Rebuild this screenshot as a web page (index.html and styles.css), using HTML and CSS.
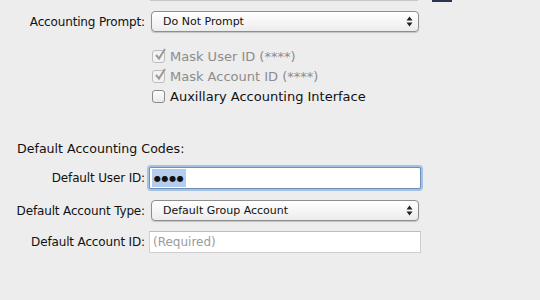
FILE: index.html
```html
<!DOCTYPE html>
<html>
<head>
<meta charset="utf-8">
<link rel="stylesheet" href="styles.css">
</head>
<body>
<div class="page">
  <div class="topbar">
    <div class="top-field"></div>
    <div class="top-square"></div>
  </div>

  <div class="row row-prompt">
    <div class="label">Accounting Prompt:</div>
    <div class="popup">
      <span class="popup-text">Do Not Prompt</span>
      <svg class="arrows" width="7" height="11" viewBox="0 0 7 11"><path d="M3.5 0.5 L6.5 4.5 L0.5 4.5 Z M3.5 10.5 L6.5 6.5 L0.5 6.5 Z" fill="#222"/></svg>
    </div>
  </div>

  <div class="checks">
    <label class="check disabled">
      <span class="box"><svg width="14" height="14" viewBox="0 0 14 14"><path d="M3 7 L6 10.5 L12 1" fill="none" stroke="#9a9a9a" stroke-width="2"/></svg></span>
      <span>Mask User ID (****)</span>
    </label>
    <label class="check disabled">
      <span class="box"><svg width="14" height="14" viewBox="0 0 14 14"><path d="M3 7 L6 10.5 L12 1" fill="none" stroke="#9a9a9a" stroke-width="2"/></svg></span>
      <span>Mask Account ID (****)</span>
    </label>
    <label class="check">
      <span class="box"></span>
      <span>Auxillary Accounting Interface</span>
    </label>
  </div>

  <div class="section-title">Default Accounting Codes:</div>

  <div class="row row-user">
    <div class="label">Default User ID:</div>
    <div class="field focused"><span class="sel">●●●●</span></div>
  </div>

  <div class="row row-type">
    <div class="label">Default Account Type:</div>
    <div class="popup">
      <span class="popup-text">Default Group Account</span>
      <svg class="arrows" width="7" height="11" viewBox="0 0 7 11"><path d="M3.5 0.5 L6.5 4.5 L0.5 4.5 Z M3.5 10.5 L6.5 6.5 L0.5 6.5 Z" fill="#222"/></svg>
    </div>
  </div>

  <div class="row row-account">
    <div class="label">Default Account ID:</div>
    <div class="field plain"><span class="placeholder">(Required)</span></div>
  </div>
</div>
</body>
</html>
```

FILE: styles.css
```css
html, body {
  margin: 0;
  padding: 0;
  background: #ededed;
}
body {
  font-family: "DejaVu Sans", "Liberation Sans", sans-serif;
  font-size: 12px;
  color: #111;
  width: 540px;
  height: 300px;
  overflow: hidden;
}
.page {
  display: flex;
  flex-direction: column;
}
.topbar {
  display: flex;
  height: 2px;
  padding-left: 150px;
  gap: 14px;
}
.top-field {
  width: 268px;
  height: 1px;
  background: #c8c8c8;
}
.top-square {
  width: 20px;
  height: 2px;
  background: #2a3550;
}
.row {
  display: flex;
  align-items: center;
}
.label {
  width: 145px;
  text-align: right;
  flex: none;
  letter-spacing: -0.15px;
}
.row-prompt {
  margin-top: 9px;
}
.popup {
  margin-left: 6px;
  width: 268px;
  height: 21px;
  box-sizing: border-box;
  border: 1px solid #8e8e8e;
  border-radius: 4px;
  background: linear-gradient(#ffffff, #f4f4f4 60%, #ececec);
  box-shadow: 0 1px 1px rgba(0,0,0,0.18);
  display: flex;
  align-items: center;
  justify-content: space-between;
  padding: 0 5px 0 11px;
}
.popup-text {
  font-size: 11px;
}
.checks {
  display: flex;
  flex-direction: column;
  padding-left: 152px;
  margin-top: 17px;
  gap: 5px;
}
.check {
  display: flex;
  align-items: center;
  gap: 5px;
  height: 15px;
  font-size: 13px;
}
.check.disabled {
  color: #8c8c8c;
}
.box {
  width: 13px;
  height: 13px;
  box-sizing: border-box;
  border: 1px solid #8a8a8a;
  border-radius: 3px;
  background: linear-gradient(#fdfdfd, #eaeaea);
  position: relative;
  flex: none;
}
.check.disabled .box {
  border-color: #bdbdbd;
  background: #f3f3f3;
}
.box svg {
  position: absolute;
  left: 0;
  top: -3px;
}
.section-title {
  margin-top: 37px;
  padding-left: 17px;
  font-size: 12.6px;
}
.row-user {
  margin-top: 11px;
}
.field {
  height: 22px;
  box-sizing: border-box;
  background: #fff;
  display: flex;
  align-items: center;
}
.field.focused {
  margin-left: 4px;
  width: 272px;
  border: 1px solid #6d8fb8;
  box-shadow: 0 0 0 2px #a5c2e4;
  border-radius: 2px;
  padding-left: 2px;
}
.sel {
  background: #b4cdef;
  height: 18px;
  display: flex;
  align-items: center;
  padding: 0 2px;
  font-size: 8px;
  letter-spacing: 0.6px;
}
.row-type {
  margin-top: 11px;
}
.row-account {
  margin-top: 10px;
}
.field.plain {
  margin-left: 4px;
  width: 272px;
  border: 1px solid #cfcfcf;
  border-top-color: #bdbdbd;
  padding-left: 3px;
}
.placeholder {
  color: #9b9b9b;
  font-size: 12px;
}
```
